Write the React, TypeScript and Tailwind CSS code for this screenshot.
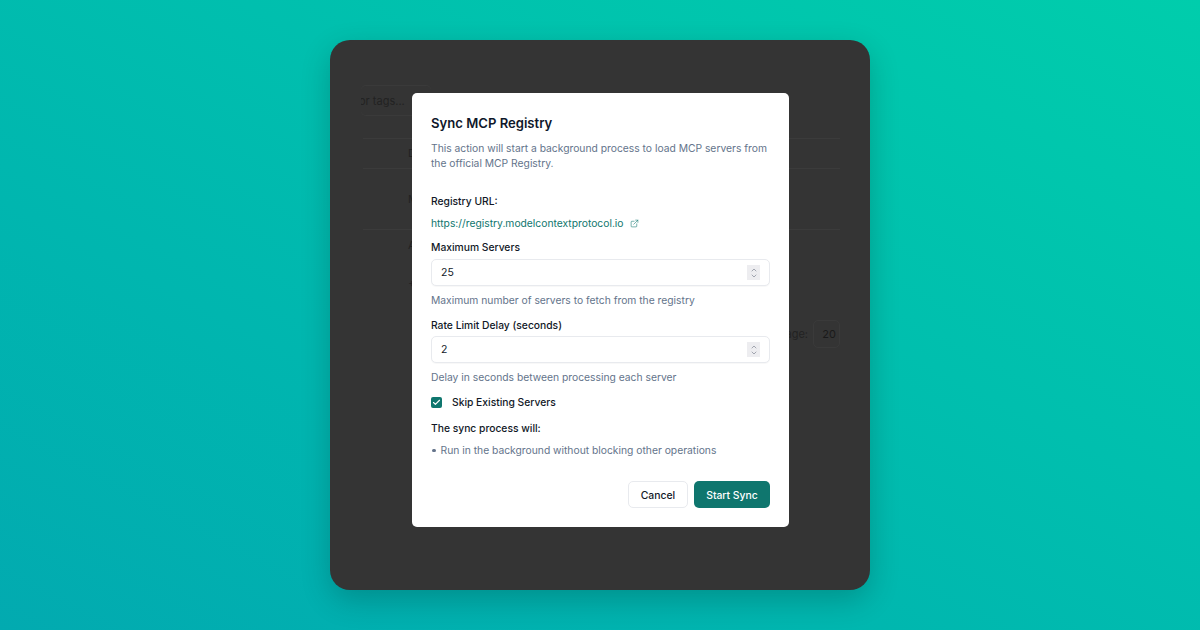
import { ChevronDown, ChevronUp, Check, ExternalLink } from 'lucide-react';

const font = { fontFamily: 'Inter, "Liberation Sans", sans-serif' };

function NumberField({ value }: { value: string }) {
  return (
    <div className="flex h-[27px] items-center justify-between rounded-[5px] border border-[#e8eaee] bg-white pl-[9px] pr-[9px] shadow-[0_1px_1px_rgba(0,0,0,0.03)]">
      <span className="pt-[2px] text-[10.5px] leading-none text-[#111827]">{value}</span>
      <span className="flex h-[15px] w-[13px] flex-col items-center justify-center bg-[#ededf0] text-[#6b7280]">
        <ChevronUp size={8} strokeWidth={1.75} className="-mb-[1px]" />
        <ChevronDown size={8} strokeWidth={1.75} className="-mt-[1px]" />
      </span>
    </div>
  );
}

function BehindPage() {
  return (
    <div className="h-full overflow-hidden pl-[33px] pr-[30px] pt-[45px] text-[11px] leading-none text-[#222222]">
      <div className="-ml-[2px] flex h-[31px] w-[70px] items-center overflow-hidden rounded-[5px] border-y border-[#3a3a3a] pt-[2px]">
        <span className="-ml-[2px] whitespace-nowrap">or tags...</span>
      </div>
      <div className="mt-[22px] h-[31px] border-y border-[#3b3b3b] pl-[45px] pt-[9px]">D</div>
      <div className="h-[61px] border-b border-[#3b3b3b] pl-[45px] pt-[25px]">M</div>
      <div className="pl-[45px] pt-[10px]">A</div>
      <div className="pl-[45px] pt-[27px]">+</div>
      <div className="mt-[31px] flex items-center justify-end gap-[5px]">
        <span>Per page:</span>
        <span className="flex h-[28px] w-[27px] items-center justify-center rounded-[5px] border border-[#3a3a3a] pl-[5px] text-[#1a1a1a]">20</span>
      </div>
    </div>
  );
}

export default function App() {
  return (
    <div
      style={font}
      className="flex h-[630px] w-[1200px] items-center justify-center overflow-hidden bg-gradient-to-tr from-[#02aab0] to-[#00cdac]"
    >
      <div className="relative h-[550px] w-[540px] overflow-hidden rounded-[20px] bg-[#343434] shadow-[0_10px_30px_rgba(0,0,0,0.2)]">
        <BehindPage />

        <div className="absolute left-[82px] top-[53px] h-[434px] w-[377px] rounded-[5px] bg-white px-[19px] pt-[21px]">
          <h2 className="text-[13.1px] font-semibold leading-[18px] text-[#0f172a]">Sync MCP Registry</h2>
          <p className="mt-[9px] text-[10.3px] leading-[15px] text-[#64748b]">
            This action will start a background process to load MCP servers from the official MCP Registry.
          </p>

          <div className="mt-[23px] text-[10.3px] font-medium leading-[15px] text-[#111827]">Registry URL:</div>
          <div className="mt-[7px] flex items-center gap-[6px] text-[10.3px] leading-[15px] text-[#0f766e]">
            <span>https://registry.modelcontextprotocol.io</span>
            <ExternalLink size={9} strokeWidth={1.5} className="-mt-[1px]" />
          </div>

          <div className="mt-[9px] text-[10.3px] font-medium leading-[15px] text-[#111827]">Maximum Servers</div>
          <div className="mt-[4px]">
            <NumberField value="25" />
          </div>
          <p className="mt-[7px] text-[10.3px] leading-[15px] text-[#64748b]">Maximum number of servers to fetch from the registry</p>

          <div className="mt-[10px] text-[10.3px] font-medium leading-[15px] text-[#111827]">Rate Limit Delay (seconds)</div>
          <div className="mt-[3px]">
            <NumberField value="2" />
          </div>
          <p className="mt-[7px] text-[10.3px] leading-[15px] text-[#64748b]">Delay in seconds between processing each server</p>

          <div className="mt-[10px] flex items-center gap-[10px]">
            <span className="flex h-[11px] w-[11px] items-center justify-center rounded-[2px] bg-[#0f766e] text-white">
              <Check size={9} strokeWidth={3} />
            </span>
            <span className="text-[10.3px] font-medium leading-[15px] text-[#111827]">Skip Existing Servers</span>
          </div>

          <div className="mt-[11px] text-[10.3px] font-medium leading-[15px] text-[#111827]">The sync process will:</div>
          <div className="mt-[7px] flex items-center gap-[6px] text-[10.3px] leading-[15px] text-[#64748b]">
            <span className="ml-[1px] h-[3.5px] w-[3.5px] rounded-full bg-[#64748b]" />
            <span className="-ml-[1px]">Run in the background without blocking other operations</span>
          </div>

          <div className="mt-[23px] flex justify-end gap-[6px]">
            <button className="h-[27px] w-[60px] rounded-[5px] border border-[#e8eaee] bg-white pt-[2px] text-[10.4px] font-medium text-[#111827]">Cancel</button>
            <button className="h-[27px] w-[76px] rounded-[5px] bg-[#0f766e] pt-[2px] text-[10.4px] font-medium text-white">Start Sync</button>
          </div>
        </div>
      </div>
    </div>
  );
}
